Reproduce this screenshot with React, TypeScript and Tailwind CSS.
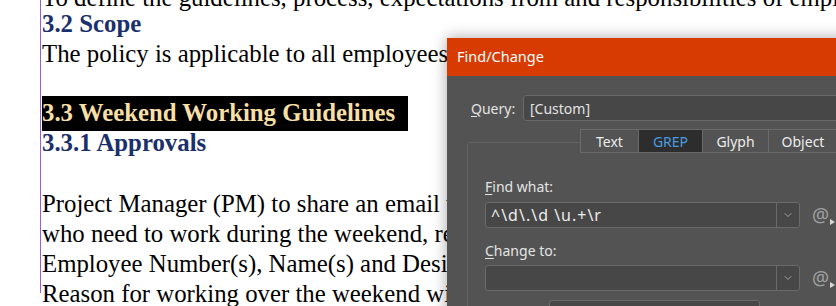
import { ChevronDown } from "lucide-react";

const serif = { fontFamily: '"Liberation Serif", "Times New Roman", serif' };

function Line({ children, className = "" }: { children: React.ReactNode; className?: string }) {
  return <div className={`h-[22px] leading-[22px] ${className}`}>{children}</div>;
}

function BodyLine({ children }: { children: React.ReactNode }) {
  return <div className="h-[30px] leading-[30px]">{children}</div>;
}

export default function App() {
  return (
    <div className="relative h-[306px] w-[836px] overflow-hidden bg-white">
      {/* Document page */}
      <div
        className="ml-[40px] h-full whitespace-nowrap border-l border-[#9b5bd6] pl-px text-[24.8px] text-black"
        style={serif}
      >
        <Line className="-mt-[13px]">
          To define the guidelines, process, expectations from and responsibilities of employees
        </Line>
        <Line className="mt-[4px] font-bold text-[#1b2f6c]">3.2 Scope</Line>
        <Line className="mt-[8px]">
          The policy is applicable to all employees working on client projects.
        </Line>
        <div className="mt-[31px] flex">
          <span className="h-[35px] bg-black pr-[13px] font-bold leading-[34px] text-[#f7dfa6]">
            3.3 Weekend Working Guidelines
          </span>
        </div>
        <Line className="mt-[1px] font-bold text-[#1b2f6c]">3.3.1 Approvals</Line>
        <div className="mt-[35px]">
          <BodyLine>Project Manager (PM) to share an email with the list of employees</BodyLine>
          <BodyLine>who need to work during the weekend, requesting approval with the</BodyLine>
          <BodyLine>Employee Number(s), Name(s) and Designation(s) of the team members.</BodyLine>
          <BodyLine>Reason for working over the weekend will also be mentioned.</BodyLine>
        </div>
      </div>

      {/* Find/Change dialog window */}
      <FindChangeDialog />
    </div>
  );
}

function FindChangeDialog() {
  return (
    <div
      className="absolute left-[447px] top-[38px] w-[480px] text-[14px] text-[#e4e4e4] shadow-[0_0_14px_rgba(0,0,0,0.35)]"
      style={{ fontFamily: '"Noto Sans", "Open Sans", sans-serif' }}
    >
      <div className="flex h-[38px] items-center bg-[#d83b01] pl-[10px] text-[14.5px] text-white">
        Find/Change
      </div>

      <div className="h-[300px] bg-[#535353] px-[20px] pt-[19px]">
        {/* Query */}
        <div className="flex items-center">
          <span className="w-[56px] pl-[4px]">
            <span className="underline underline-offset-2">Q</span>uery:
          </span>
          <div className="flex h-[26px] flex-1 items-center rounded-[3px] border border-[#6a6a6a] bg-[#474747] pl-[6px]">
            [Custom]
          </div>
        </div>

        {/* Tabs */}
        <div className="relative z-10 ml-[113px] mt-[8px] flex h-[24px]">
          <Tab label="Text" width="w-[59px]" />
          <Tab label="GREP" width="w-[65px]" active />
          <Tab label="Glyph" width="w-[67px]" />
          <Tab label="Object" width="w-[70px]" />
        </div>

        {/* Group box */}
        <div className="-mt-[11px] h-[260px] rounded-[3px] border border-[#636363] pl-[17px] pt-[34px]">
          <div className="leading-[20px]">
            <span className="underline underline-offset-2">F</span>ind what:
          </div>
          <ComboRow value="^\d\.\d \u.+\r" className="mt-[5px]" />

          <div className="mt-[13px] leading-[20px]">
            <span className="underline underline-offset-2">C</span>hange to:
          </div>
          <ComboRow value="" className="mt-[4px]" />

          <div className="mt-[9px] flex">
            <span className="flex h-[26px] w-[64px] items-center pt-[12px]">
              <span className="underline underline-offset-2">S</span>earch:
            </span>
            <div className="h-[26px] w-[211px] rounded-[3px] border border-[#6a6a6a] bg-[#474747]" />
          </div>
        </div>
      </div>
    </div>
  );
}

function Tab({ label, width, active }: { label: string; width: string; active?: boolean }) {
  return (
    <div
      className={`flex ${width} items-center justify-center border border-[#6a6a6a] ${
        active ? "bg-[#2d2d2d] text-[#4a9ce0]" : "bg-[#535353] text-[#ececec]"
      } -ml-px first:ml-0`}
    >
      {label}
    </div>
  );
}

function ComboRow({ value, className }: { value: string; className?: string }) {
  return (
    <div className={`flex items-center ${className ?? ""}`}>
      <div className="flex h-[26px] w-[315px] rounded-[3px] border border-[#6a6a6a] bg-[#474747]">
        <div className="flex flex-1 items-center pl-[5px] text-[16px] tracking-[1px] text-[#ededed]">
          {value}
        </div>
        <div className="flex w-[23px] items-center justify-center border-l border-[#6a6a6a]">
          <ChevronDown className="h-[12px] w-[12px] text-[#bdbdbd]" strokeWidth={1.5} />
        </div>
      </div>
      <div className="relative ml-[12px] text-[19px] leading-none text-[#a0a0a0]">
        @
        <svg className="absolute -right-[6px] bottom-[0px]" width="5" height="6" viewBox="0 0 5 6">
          <path d="M0 0 L5 3 L0 6 Z" fill="#d8d8d8" />
        </svg>
      </div>
    </div>
  );
}
